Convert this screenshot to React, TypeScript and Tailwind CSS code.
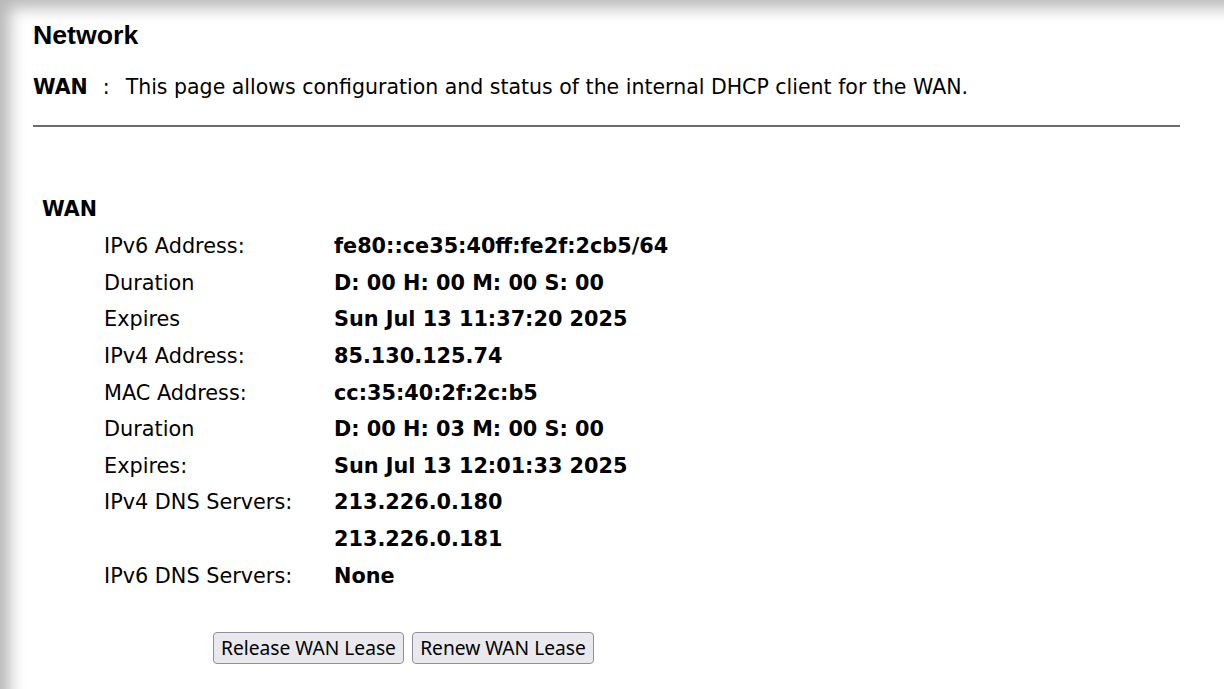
import React from "react";

const rows: [string, string][] = [
  ["IPv6 Address:", "fe80::ce35:40ff:fe2f:2cb5/64"],
  ["Duration", "D: 00 H: 00 M: 00 S: 00"],
  ["Expires", "Sun Jul 13 11:37:20 2025"],
  ["IPv4 Address:", "85.130.125.74"],
  ["MAC Address:", "cc:35:40:2f:2c:b5"],
  ["Duration", "D: 00 H: 03 M: 00 S: 00"],
  ["Expires:", "Sun Jul 13 12:01:33 2025"],
  ["IPv4 DNS Servers:", "213.226.0.180"],
  ["", "213.226.0.181"],
  ["IPv6 DNS Servers:", "None"],
];

const btnCls =
  "h-[32px] px-0 whitespace-nowrap rounded-[4px] border border-[#8f8f9d] bg-[#e9e9ed] text-[19.2px] text-black font-['Noto_Sans',sans-serif] leading-none";

export default function App() {
  return (
    <div className="min-h-[689px] bg-white shadow-[inset_18px_16px_16px_-8px_rgba(0,0,0,0.28)] font-['DejaVu_Sans',Verdana,sans-serif] text-black">
      <div className="pl-[33px] pr-[44px] pt-[19px]">
        <h1 className="font-['Liberation_Sans',Arial,sans-serif] font-bold text-[26.7px] leading-[32px]">Network</h1>
        <p className="mt-[24px] text-[20.5px] leading-[24px] whitespace-nowrap">
          <span className="font-bold">WAN</span>
          <span className="ml-[15px] mr-[16px]">:</span>
          This page allows configuration and status of the internal DHCP client for the WAN.
        </p>
        <div className="mt-[26px] h-[2px] bg-[#6b6b6b]" />
      </div>

      <div className="pl-[42px] pt-[70px]">
        <div className="text-[20.6px] font-bold leading-[24px]">WAN</div>
        <div className="mt-[7px] pl-[62px]">
          {rows.map(([label, value], i) => (
            <div key={i} className="flex h-[36.6px] items-center text-[20.8px] leading-[24px] whitespace-nowrap">
              <div className="w-[230px]">{label}</div>
              <div className="font-bold">{value}</div>
            </div>
          ))}
        </div>
        <div className="mt-[38px] flex gap-[8px] pl-[171px]">
          <button type="button" className={btnCls + " w-[191px]"}>Release WAN Lease</button>
          <button type="button" className={btnCls + " w-[182px]"}>Renew WAN Lease</button>
        </div>
      </div>
    </div>
  );
}
